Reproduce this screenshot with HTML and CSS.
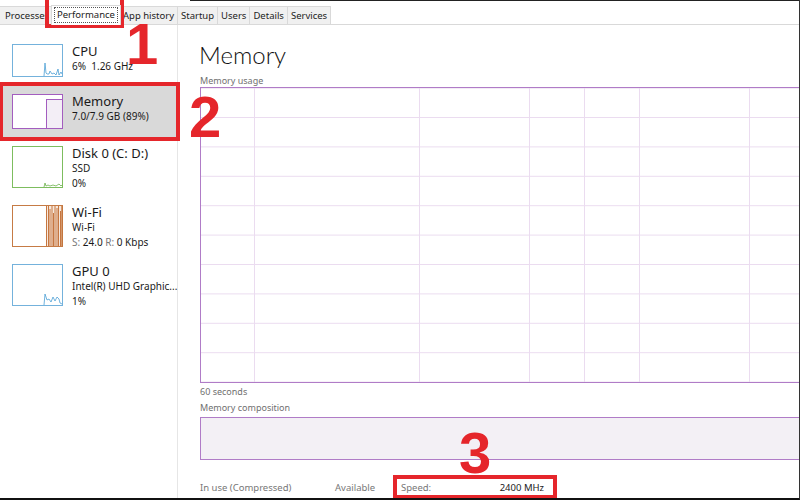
FILE: index.html
```html
<!DOCTYPE html>
<html lang="en">
<head>
    <meta charset="UTF-8">
    <meta name="viewport" content="width=device-width, initial-scale=1.0">
    <title>Task Manager - Performance</title>
    <link rel="stylesheet" href="styles.css">
</head>
<body>
    <div class="janela">
        <div class="abas">
            <div class="aba aba-cortada">Processes</div>
            <div class="aba ativa"><span class="foco">Performance</span></div>
            <div class="aba">App history</div>
            <div class="aba">Startup</div>
            <div class="aba">Users</div>
            <div class="aba">Details</div>
            <div class="aba">Services</div>
        </div>

        <div class="conteudo">
            <div class="lateral">
                <div class="item">
                    <svg class="mini" width="51" height="33" viewBox="0 0 51 33">
                        <rect x="0.5" y="0.5" width="50" height="32" fill="#fff" stroke="#74b2dc"/>
                        <polyline points="32,32 33,19 34,29 35,30 37,30 38,27 40,30 42,29 44,31 46,25 47,31 49,28 50,30" fill="none" stroke="#4d9fd4" stroke-width="0.8"/>
                    </svg>
                    <div class="textos">
                        <div class="nome">CPU</div>
                        <div class="info">6%&nbsp; 1.26 GHz</div>
                    </div>
                </div>
                <div class="item selecionado">
                    <svg class="mini" width="51" height="35" viewBox="0 0 51 35">
                        <rect x="0.5" y="0.5" width="50" height="34" fill="#fff" stroke="#a35dbf"/>
                        <rect x="34.5" y="5.5" width="16" height="29" fill="#f3eef6" stroke="#a35dbf"/>
                    </svg>
                    <div class="textos">
                        <div class="nome">Memory</div>
                        <div class="info">7.0/7.9 GB (89%)</div>
                    </div>
                </div>
                <div class="item">
                    <svg class="mini" width="51" height="42" viewBox="0 0 51 42">
                        <rect x="0.5" y="0.5" width="50" height="41" fill="#fff" stroke="#7dbd5e"/>
                        <polyline points="32,41 33,37 34,40 36,39 38,40 41,39 44,40 47,38 49,40 50,39" fill="none" stroke="#6cb04b" stroke-width="0.8"/>
                    </svg>
                    <div class="textos">
                        <div class="nome">Disk 0 (C: D:)</div>
                        <div class="info">SSD</div>
                        <div class="info">0%</div>
                    </div>
                </div>
                <div class="item">
                    <svg class="mini" width="51" height="42" viewBox="0 0 51 42">
                        <rect x="0.5" y="0.5" width="50" height="41" fill="#fff" stroke="#c67b45"/>
                        <rect x="34" y="1" width="16" height="40" fill="#f7e8dc"/>
                        <g stroke="#c0692e" stroke-width="0.9">
                            <line x1="34.5" y1="1" x2="34.5" y2="41"/>
                            <line x1="36.5" y1="1" x2="36.5" y2="41"/>
                            <line x1="38" y1="4" x2="38" y2="41"/>
                            <line x1="40" y1="1" x2="40" y2="41"/>
                            <line x1="41.5" y1="8" x2="41.5" y2="41"/>
                            <line x1="43" y1="1" x2="43" y2="41"/>
                            <line x1="45" y1="3" x2="45" y2="41"/>
                            <line x1="46.5" y1="1" x2="46.5" y2="41"/>
                            <line x1="48.5" y1="6" x2="48.5" y2="41"/>
                            <line x1="49.8" y1="1" x2="49.8" y2="41"/>
                        </g>
                    </svg>
                    <div class="textos">
                        <div class="nome">Wi-Fi</div>
                        <div class="info">Wi-Fi</div>
                        <div class="info"><span class="rotulo">S:</span> 24.0 <span class="rotulo">R:</span> 0 Kbps</div>
                    </div>
                </div>
                <div class="item">
                    <svg class="mini" width="51" height="42" viewBox="0 0 51 42">
                        <rect x="0.5" y="0.5" width="50" height="41" fill="#fff" stroke="#74b2dc"/>
                        <polyline points="32,41 33,30 35,36 37,35 39,38 41,33 43,37 45,33 47,35 48,39 50,40" fill="none" stroke="#4d9fd4" stroke-width="0.8"/>
                    </svg>
                    <div class="textos">
                        <div class="nome">GPU 0</div>
                        <div class="info">Intel(R) UHD Graphic...</div>
                        <div class="info">1%</div>
                    </div>
                </div>
            </div>

            <div class="principal">
                <h1 class="titulo">Memory</h1>
                <div class="legenda legenda-uso">Memory usage</div>
                <div class="grafico">
                    <svg class="grade" width="640" height="294">
                        <defs>
                            <pattern id="celula" width="55" height="29.4" x="53" y="29" patternUnits="userSpaceOnUse">
                                <path d="M0.5 0V29.4M0 0.5H55" stroke="#ebdcf0" stroke-width="1" fill="none"/>
                            </pattern>
                        </defs>
                        <rect width="640" height="294" fill="url(#celula)"/>
                    </svg>
                </div>
                <div class="legenda legenda-tempo">60 seconds</div>
                <div class="legenda legenda-comp">Memory composition</div>
                <div class="composicao"></div>
                <div class="estatisticas">
                    <span class="est-uso">In use (Compressed)</span>
                    <span class="est-disp">Available</span>
                    <span class="est-vel">Speed:</span>
                    <span class="est-valor">2400 MHz</span>
                </div>
            </div>
        </div>

        <!-- marcacoes vermelhas por cima do print -->
        <div class="marca marca1"></div>
        <div class="numero num1">1</div>
        <div class="marca marca2"></div>
        <div class="numero num2">2</div>
        <div class="marca marca3"></div>
        <div class="numero num3">3</div>
    </div>
</body>
</html>
```

FILE: styles.css
```css
body {
    margin: 0;
    background-color: #fff;
    font-family: "Noto Sans", "Open Sans", sans-serif;
    color: #1a1a1a;
}
.janela {
    position: relative;
    width: 800px;
    height: 500px;
    overflow: hidden;
    box-sizing: border-box;
    border-bottom: 2px solid #111;
    border-right: 1px solid #333;
}
.janela::before {
    content: "";
    position: absolute;
    left: 190px;
    right: 0;
    top: 0;
    height: 1px;
    background-color: #222;
}
.abas {
    display: flex;
    align-items: flex-end;
    height: 19px;
    margin-top: 5px;
    border-bottom: 1px solid #d9d9d9;
}
.aba {
    height: 17px;
    padding: 0 3px;
    margin-left: -1px;
    background-color: #f0f0f0;
    border: 1px solid #d9d9d9;
    border-bottom: none;
    font-size: 9.5px;
    line-height: 17px;
    white-space: nowrap;
    color: #222;
}
.aba-cortada {
    width: 43px;
    overflow: hidden;
    margin-left: 0;
    padding-left: 5px;
    border-left: none;
}
.ativa {
    position: relative;
    z-index: 1;
    height: 19px;
    margin: 0 -1px -1px -1px;
    padding: 0 2px;
    background-color: #fff;
}
.foco {
    display: inline-block;
    margin-top: 1px;
    padding: 0 2px;
    line-height: 14px;
    border: 1px dotted #555;
}
.conteudo {
    display: flex;
    height: 474px;
}
.lateral {
    width: 178px;
    flex-shrink: 0;
    padding-top: 11px;
    border-right: 1px solid #e6e6e6;
    box-sizing: border-box;
}
.item {
    display: flex;
    align-items: flex-start;
    padding: 8px 0 8px 12px;
    margin-bottom: 1px;
}
.selecionado {
    background-color: #d9d9d9;
}
.mini {
    display: block;
    flex-shrink: 0;
}
.textos {
    margin: -1px 0 -6px 9px;
}
.nome {
    font-size: 13px;
    line-height: 16px;
}
.info {
    font-size: 10px;
    line-height: 15px;
    white-space: nowrap;
}
.rotulo {
    color: #777;
}
.principal {
    flex: 1;
    padding-left: 22px;
    overflow: hidden;
    display: flex;
    flex-direction: column;
}
.titulo {
    margin: 15px 0 0 -1px;
    font-family: "Lato", "Noto Sans", sans-serif;
    font-size: 24px;
    font-weight: 300;
    line-height: 30px;
    color: #111;
}
.legenda {
    font-size: 9px;
    line-height: 12px;
    color: #707070;
    white-space: nowrap;
}
.legenda-uso {
    margin-top: 5px;
}
.grafico {
    width: 640px;
    height: 294px;
    flex-shrink: 0;
    border: 1px solid #b07cc7;
}
.grade {
    display: block;
}
.legenda-tempo {
    margin-top: 3px;
}
.legenda-comp {
    margin-top: 4px;
}
.composicao {
    width: 640px;
    height: 41px;
    flex-shrink: 0;
    margin-top: 3px;
    background-color: #f3f0f5;
    border: 1px solid #b07cc7;
}
.estatisticas {
    display: flex;
    margin-top: 22px;
    font-size: 9.5px;
    line-height: 12px;
    color: #777;
    white-space: nowrap;
}
.est-uso {
    width: 135px;
}
.est-disp {
    width: 66px;
}
.est-vel {
    width: 89px;
}
.est-valor {
    width: 54px;
    text-align: right;
    color: #222;
}
.marca {
    position: absolute;
    border: 4px solid #e5262b;
    box-sizing: border-box;
}
.marca1 {
    left: 45px;
    top: -4px;
    width: 79px;
    height: 32px;
}
.marca2 {
    left: -1px;
    top: 82px;
    width: 181px;
    height: 59px;
}
.marca3 {
    left: 393px;
    top: 475px;
    width: 164px;
    height: 24px;
}
.numero {
    position: absolute;
    font-family: "Liberation Sans", Arial, sans-serif;
    font-weight: bold;
    font-size: 58px;
    line-height: 42px;
    color: #e5262b;
}
.num1 {
    left: 126px;
    top: 23px;
}
.num2 {
    left: 189px;
    top: 96px;
}
.num3 {
    left: 459px;
    top: 432px;
}
```
